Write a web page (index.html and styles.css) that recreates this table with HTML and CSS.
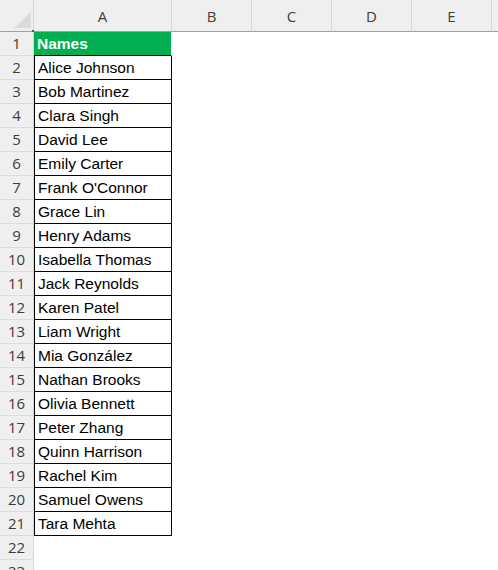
FILE: index.html
```html
<!DOCTYPE html>
<html>
<head>
<meta charset="utf-8">
<link rel="stylesheet" href="styles.css">
</head>
<body>
<div class="sheet">
  <div class="hd corner"><span class="tri"></span><span class="dot"></span></div>
  <div class="hd col">A</div>
  <div class="hd col">B</div>
  <div class="hd col">C</div>
  <div class="hd col">D</div>
  <div class="hd col">E</div>
  <div class="hd col last"></div>

  <div class="rh">1</div><div class="a title">Names</div><div class="blank"></div>
  <div class="rh">2</div><div class="a">Alice Johnson</div><div class="blank"></div>
  <div class="rh">3</div><div class="a">Bob Martinez</div><div class="blank"></div>
  <div class="rh">4</div><div class="a">Clara Singh</div><div class="blank"></div>
  <div class="rh">5</div><div class="a">David Lee</div><div class="blank"></div>
  <div class="rh">6</div><div class="a">Emily Carter</div><div class="blank"></div>
  <div class="rh">7</div><div class="a">Frank O'Connor</div><div class="blank"></div>
  <div class="rh">8</div><div class="a">Grace Lin</div><div class="blank"></div>
  <div class="rh">9</div><div class="a">Henry Adams</div><div class="blank"></div>
  <div class="rh">10</div><div class="a">Isabella Thomas</div><div class="blank"></div>
  <div class="rh">11</div><div class="a">Jack Reynolds</div><div class="blank"></div>
  <div class="rh">12</div><div class="a">Karen Patel</div><div class="blank"></div>
  <div class="rh">13</div><div class="a">Liam Wright</div><div class="blank"></div>
  <div class="rh">14</div><div class="a">Mia González</div><div class="blank"></div>
  <div class="rh">15</div><div class="a">Nathan Brooks</div><div class="blank"></div>
  <div class="rh">16</div><div class="a">Olivia Bennett</div><div class="blank"></div>
  <div class="rh">17</div><div class="a">Peter Zhang</div><div class="blank"></div>
  <div class="rh">18</div><div class="a">Quinn Harrison</div><div class="blank"></div>
  <div class="rh">19</div><div class="a">Rachel Kim</div><div class="blank"></div>
  <div class="rh">20</div><div class="a">Samuel Owens</div><div class="blank"></div>
  <div class="rh">21</div><div class="a">Tara Mehta</div><div class="blank"></div>
  <div class="rh">22</div><div class="e"></div><div class="blank"></div>
  <div class="rh">23</div><div class="e"></div><div class="blank"></div>
</div>
</body>
</html>
```
FILE: styles.css
```css
* { box-sizing: border-box; }
html, body {
  margin: 0;
  padding: 0;
  width: 498px;
  height: 570px;
  overflow: hidden;
  background: #fff;
}
.sheet {
  display: grid;
  grid-template-columns: 34px 138px 80px 80px 80px 80px 1fr;
  grid-template-rows: 32px repeat(23, 24px);
  width: 498px;
}
.hd {
  background: #efefef;
  border-bottom: 1px solid #9f9f9f;
  border-right: 1px solid #d6d6d6;
  font-family: "Open Sans", "Noto Sans", sans-serif;
  font-size: 15px;
  color: #3c3c3c;
  display: flex;
  align-items: center;
  justify-content: center;
  padding-top: 1px;
}
.hd.last { border-right: none; }
.corner { position: relative; }
.tri {
  position: absolute;
  right: 2px;
  bottom: 3px;
  width: 0;
  height: 0;
  border-left: 17px solid transparent;
  border-bottom: 16px solid #dadada;
}
.dot {
  position: absolute;
  right: -1px;
  bottom: -1px;
  width: 2px;
  height: 2px;
  background: #1e7145;
}
.rh {
  background: #efefef;
  border-right: 1px solid #d6d6d6;
  border-bottom: 1px solid #dcdcdc;
  font-family: "Open Sans", "Noto Sans", sans-serif;
  font-size: 15px;
  color: #3c3c3c;
  display: flex;
  align-items: flex-end;
  justify-content: center;
  padding-bottom: 1px;
  line-height: 21px;
}
.a {
  grid-column: 2;
  border-left: 1px solid #000;
  border-right: 1px solid #000;
  border-bottom: 1px solid #000;
  font-family: "Liberation Sans", Arial, sans-serif;
  font-size: 15.5px;
  line-height: 23px;
  color: #000;
  padding-left: 3px;
  white-space: nowrap;
  overflow: hidden;
}
.a.title {
  background: #00b050;
  color: #fff;
  font-weight: bold;
  border-left: none;
  border-right: 1px solid #fff;
  padding-left: 3px;
}
.e { grid-column: 2; }
.blank { grid-column: 3 / 8; }
```
